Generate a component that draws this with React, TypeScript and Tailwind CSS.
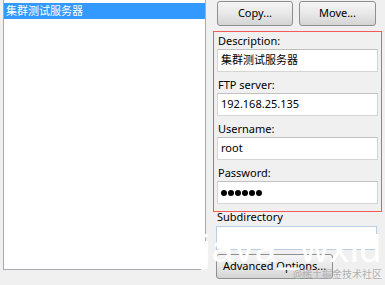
import React from "react";

const font = { fontFamily: '"Noto Sans", "Noto Sans CJK SC", sans-serif' };

function Label({ text, cls }: { text: string; cls: string }) {
  return <div className={`text-[11px] text-black pl-[1px] ${cls}`}>{text}</div>;
}

function Field({ value, password }: { value: string; password?: boolean }) {
  return (
    <div className="h-[23px] w-[161px] bg-white border border-[#d5d5d5] border-t-[#c0c0c0] flex items-center pl-[3px] text-[11px] text-black">
      {password ? (
        <span className="flex gap-[1px]">
          {[0, 1, 2, 3, 4, 5].map((i) => (
            <span key={i} className="w-[6px] h-[6px] rounded-full bg-black inline-block" />
          ))}
        </span>
      ) : (
        value
      )}
    </div>
  );
}

function Btn({ text, cls }: { text: string; cls: string }) {
  return (
    <div
      className={`h-[25px] flex items-center justify-center rounded-[3px] border border-[#8e8e8e] bg-gradient-to-b from-[#f5f5f5] via-[#e8e8e8] to-[#d4d4d4] text-[11px] text-black ${cls}`}
    >
      {text}
    </div>
  );
}

export default function App() {
  return (
    <div className="relative w-[385px] h-[285px] bg-[#f0f0f0] overflow-hidden flex" style={font}>
      <div className="ml-[3px] w-[203px] h-[270px] bg-white border-l border-r border-b border-[#a9abb1] pt-[3px] flex-none">
        <div className="h-[16px] bg-[#3399ff] text-white text-[11px] leading-[16px] pl-[2px]">集群测试服务器</div>
      </div>
      <div className="ml-[7px] w-[169px] flex flex-col flex-none">
        <div className="flex gap-[6px] pl-[4px] mt-[1px]">
          <Btn text="Copy..." cls="w-[76px]" />
          <Btn text="Move..." cls="w-[77px]" />
        </div>
        <div className="mt-[5px] h-[181px] border border-[#f25a5a] pl-[3px] flex flex-col">
          <Label text="Description:" cls="h-[17px] leading-[17px]" />
          <Field value="集群测试服务器" />
          <Label text="FTP server:" cls="mt-[5px] h-[16px] leading-[16px]" />
          <Field value="192.168.25.135" />
          <Label text="Username:" cls="mt-[5px] h-[16px] leading-[16px]" />
          <Field value="root" />
          <Label text="Password:" cls="mt-[5px] h-[16px] leading-[16px]" />
          <Field value="" password />
        </div>
        <div className="pl-[3px] flex flex-col">
          <div className="text-[11px] text-black h-[14px] leading-[14px] -mt-[2px] pl-[1px]">Subdirectory</div>
          <div className="mt-[2px] h-[24px] w-[161px] bg-white border border-[#b9cde3]" />
          <Btn text="Advanced Options..." cls="mt-[4px] w-[117px]" />
        </div>
      </div>
      <div
        className="absolute left-[202px] top-[229px] text-[39px] leading-[40px] text-white tracking-[1px]"
        style={{ fontFamily: '"Liberation Sans", sans-serif' }}
      >
        java_wxid
      </div>
      <div className="absolute right-[3px] top-[268px] text-[10px] leading-[12px] text-[#b0b0b0]">@稀土掘金技术社区</div>
    </div>
  );
}
